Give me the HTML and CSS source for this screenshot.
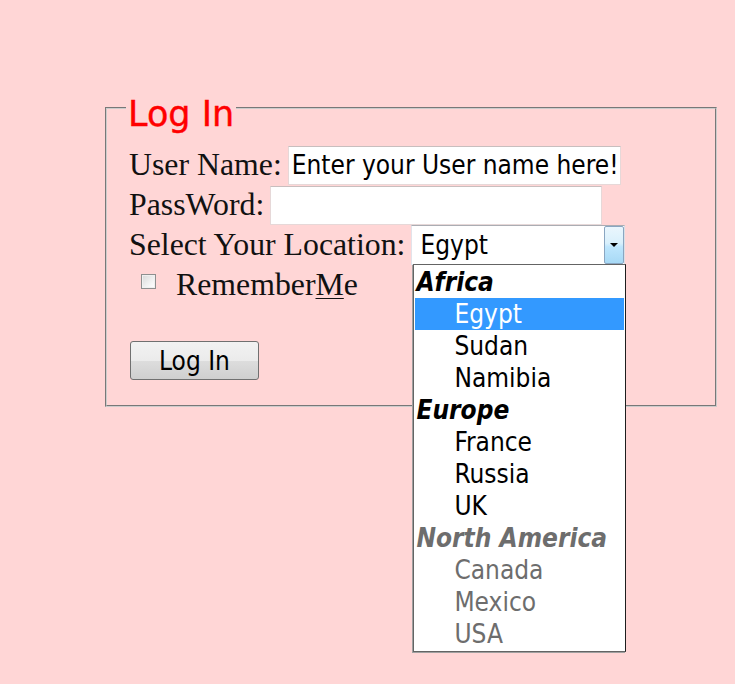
FILE: index.html
```html
<!DOCTYPE html>
<html lang="en">
<head>
<meta charset="utf-8">
<title>Log In</title>
<link rel="stylesheet" href="styles.css">
</head>
<body>
<form class="login">
  <fieldset class="box">
    <legend class="box-title">Log In</legend>
    <div class="row">
      <label class="label" for="user">User Name:</label>
      <input class="field field-user" id="user" type="text" value="Enter your User name here!">
    </div>
    <div class="row">
      <label class="label" for="pass">PassWord:</label>
      <input class="field field-pass" id="pass" type="password">
    </div>
    <div class="row">
      <span class="label">Select Your Location:</span>
      <div class="select">
        <div class="select-box">
          <span class="select-value">Egypt</span>
          <span class="select-arrow"><span class="tri"></span></span>
        </div>
        <div class="dropdown">
          <div class="group">Africa</div>
          <div class="opt opt-selected">Egypt</div>
          <div class="opt">Sudan</div>
          <div class="opt">Namibia</div>
          <div class="group">Europe</div>
          <div class="opt">France</div>
          <div class="opt">Russia</div>
          <div class="opt">UK</div>
          <div class="group group-disabled">North America</div>
          <div class="opt opt-disabled">Canada</div>
          <div class="opt opt-disabled">Mexico</div>
          <div class="opt opt-disabled">USA</div>
        </div>
      </div>
    </div>
    <div class="row row-check">
      <input class="check" id="remember" type="checkbox">
      <label class="label check-label" for="remember" accesskey="m">Remember<u>M</u>e</label>
    </div>
    <button class="btn" type="button">Log In</button>
  </fieldset>
</form>
</body>
</html>
```
FILE: styles.css
```css
html, body {
  margin: 0;
  padding: 0;
}
body {
  background: #ffd6d6;
  width: 735px;
  height: 684px;
  overflow: hidden;
}
.login {
  margin: 0;
  padding: 80px 0 0 105px;
}
.box {
  box-sizing: border-box;
  width: 612px;
  margin: 0;
  padding: 10px 20px 25px 22px;
  border: 2px groove #cccccc;
}
.box-title {
  margin-left: -3px;
  padding: 14px 2px 0;
  font-family: "DejaVu Sans", sans-serif;
  font-size: 35px;
  line-height: 41px;
  color: #ff0000;
  -webkit-text-stroke: 0.4px #ff0000;
}
.row {
  display: flex;
  align-items: center;
  height: 40px;
}
.label {
  font-family: "Liberation Serif", serif;
  font-size: 31.8px;
  line-height: 36px;
  color: #111;
  margin-right: 6px;
  white-space: nowrap;
}
.field {
  box-sizing: border-box;
  height: 39px;
  margin: 0;
  padding: 0 3px;
  border: 1px solid #e6d8d8;
  border-top-color: #c8bebe;
  background: #fff;
  font-family: "DejaVu Sans Condensed", "DejaVu Sans", sans-serif;
  font-stretch: condensed;
  font-size: 26px;
  color: #000;
  outline: none;
}
.field-user { width: 333px; }
.field-pass { width: 332px; }

.select {
  position: relative;
  width: 214px;
  height: 40px;
}
.select-box {
  box-sizing: border-box;
  display: flex;
  align-items: center;
  height: 40px;
  border: 1px solid #abadb3;
  border-color: #abadb3 #dbdfe6 #e3e9ef #e2e3ea;
  background: #fff;
  padding-left: 8px;
}
.select-value {
  flex: 1;
  font-family: "DejaVu Sans Condensed", "DejaVu Sans", sans-serif;
  font-stretch: condensed;
  font-size: 26px;
  line-height: 32px;
  color: #000;
}
.select-arrow {
  box-sizing: border-box;
  display: flex;
  align-items: center;
  justify-content: center;
  width: 20px;
  height: 38px;
  border: 1px solid #8aa6c1;
  border-radius: 2px;
  background: linear-gradient(#eaf6fd, #d9f0fc 45%, #bee6fd 55%, #a7d9f5);
}
.tri {
  width: 0;
  height: 0;
  border-left: 4px solid transparent;
  border-right: 4px solid transparent;
  border-top: 4px solid #000;
}
.dropdown {
  position: absolute;
  top: 39px;
  left: 2px;
  box-sizing: border-box;
  width: 213px;
  padding: 1px;
  border: 1px solid #646464;
  border-right-color: #1e1e1e;
  background: #fff;
  box-shadow: -1px 1px 0 #a0a0a0;
  font-family: "DejaVu Sans Condensed", "DejaVu Sans", sans-serif;
  font-stretch: condensed;
  font-size: 26px;
  line-height: 32px;
  color: #000;
  z-index: 2;
}
.group {
  height: 32px;
  padding-left: 1px;
  font-weight: bold;
  font-style: italic;
}
.opt {
  height: 32px;
  padding-left: 39px;
}
.opt-selected {
  background: #3399ff;
  color: #fff;
}
.group-disabled,
.opt-disabled {
  color: #6d6d6d;
}
.row-check {
  padding-left: 12px;
}
.check {
  appearance: none;
  -webkit-appearance: none;
  box-sizing: border-box;
  width: 15px;
  height: 15px;
  margin: -8px 20px 0 0;
  border: 1px solid #8e8f8f;
  background: linear-gradient(135deg, #d8d8d8, #f6f6f6 70%, #ffffff);
  box-shadow: inset 0 0 0 1px #f0f0f0;
}
.check-label u {
  text-decoration-thickness: 1px;
  text-underline-offset: 3px;
}
.btn {
  display: block;
  box-sizing: border-box;
  width: 129px;
  height: 39px;
  margin: 36px 0 0 1px;
  padding: 0;
  border: 1px solid #707070;
  border-radius: 3px;
  background: linear-gradient(#f2f2f2, #ebebeb 50%, #dddddd 51%, #cfcfcf);
  font-family: "DejaVu Sans Condensed", "DejaVu Sans", sans-serif;
  font-stretch: condensed;
  font-size: 26px;
  color: #000;
}
```
